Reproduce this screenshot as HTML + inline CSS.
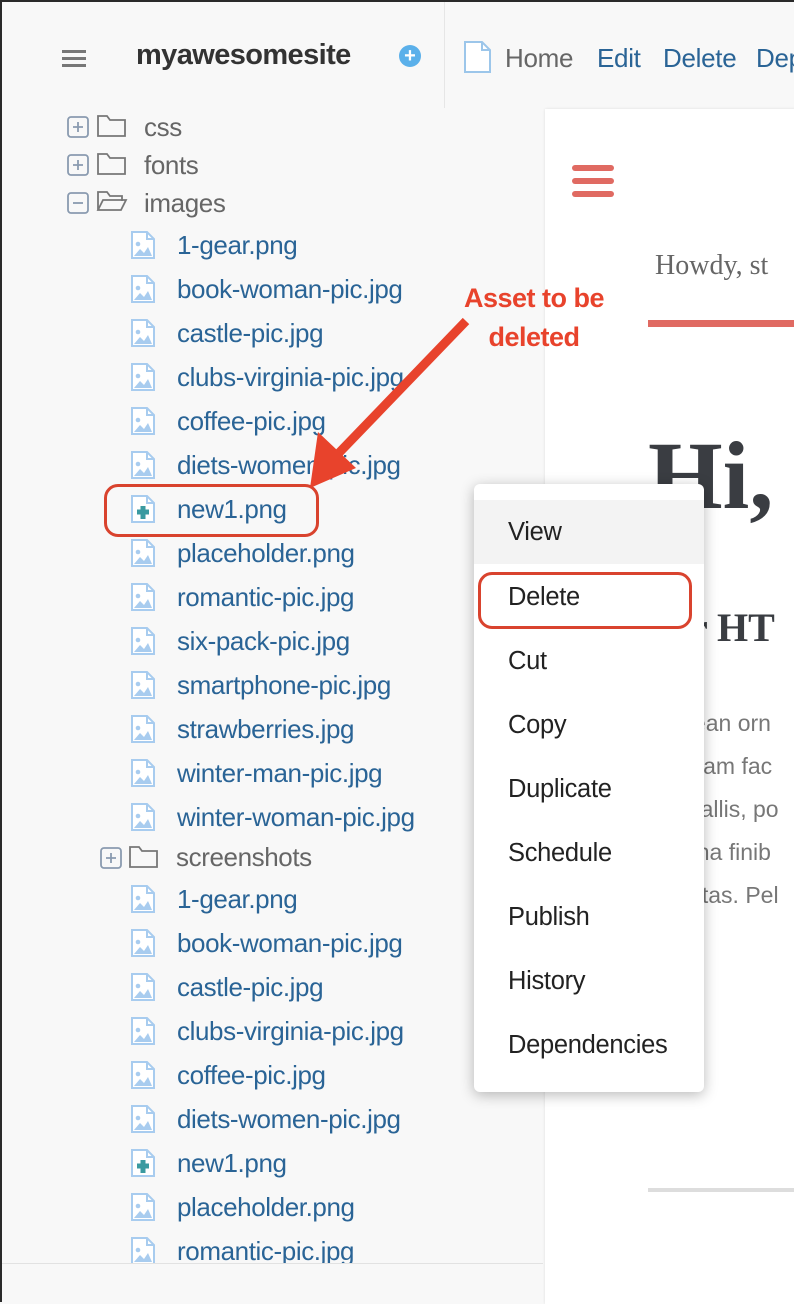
<!DOCTYPE html>
<html><head><meta charset="utf-8"><style>
*{margin:0;padding:0;box-sizing:border-box}
body{width:794px;height:1302px;overflow:hidden;background:#f8f8f8;font-family:"Liberation Sans",sans-serif;position:relative}
#w{position:absolute;left:2px;top:2px;width:794px;height:1302px}
.a{position:absolute;white-space:nowrap}
.f{position:absolute;left:175px;font-size:26px;color:#2a6496;letter-spacing:-0.4px;line-height:30px}
.ic{position:absolute;left:128px;width:26px;height:30px}
.fo{position:absolute;font-size:26px;color:#666;line-height:30px;letter-spacing:-0.4px}
.mi{position:absolute;left:506px;font-size:25.5px;color:#222;line-height:30px;letter-spacing:-0.3px}
</style></head><body>
<div id="w">
<div class="a" style="left:442px;top:0;width:1px;height:106px;background:#e6e6e6"></div>
<div class="a" style="left:543px;top:107px;width:251px;height:1195px;background:#fff;box-shadow:0 0 3px rgba(0,0,0,.1)"></div>
<div class="a" style="left:60px;top:48px;width:24px;height:3px;background:#777;box-shadow:0 7px 0 #777,0 14px 0 #777"></div>
<div class="a" style="left:134px;top:37px;font-size:29px;font-weight:bold;color:#333;letter-spacing:-0.6px">myawesomesite</div>
<div class="a" style="left:397px;top:43px;width:22px;height:22px;border-radius:50%;background:#5bb0ea;color:#fff;font-size:20px;font-weight:bold;line-height:22px;text-align:center">+</div>
<svg class="a" style="left:461px;top:38px" width="30" height="34"><path d="M2 2h17l8 8v22H2z" fill="#fff" stroke="#9cc6ea" stroke-width="2"/><path d="M19 2v8h8" fill="none" stroke="#9cc6ea" stroke-width="2"/></svg>
<div class="a" style="left:503px;top:41px;font-size:26px;color:#666;letter-spacing:-0.3px">Home</div>
<div class="a" style="left:595px;top:41px;font-size:26px;color:#2a6496;letter-spacing:-0.3px">Edit</div>
<div class="a" style="left:661px;top:41px;font-size:26px;color:#2a6496;letter-spacing:-0.3px">Delete</div>
<div class="a" style="left:754px;top:41px;font-size:26px;color:#2a6496;letter-spacing:-0.3px">Dep</div>
<svg class="a" style="left:64px;top:110px" width="64" height="110">
<g fill="none" stroke="#8a9bb0" stroke-width="1.8"><rect x="2" y="5" width="20" height="20" rx="3"/><path d="M7 15h10M12 10v10"/><rect x="2" y="43" width="20" height="20" rx="3"/><path d="M7 53h10M12 48v10"/><rect x="2" y="81" width="20" height="20" rx="3"/><path d="M7 91h10"/></g>
<g fill="none" stroke="#777" stroke-width="1.8"><path d="M32 4h9l3 4h15v16H32z"/><path d="M32 42h9l3 4h15v16H32z"/><path d="M32 98V80h9l3 4h12v5M32 98l5-10h23l-5 10z"/></g></svg>
<div class="fo" style="left:142px;top:110px">css</div>
<div class="fo" style="left:142px;top:148px">fonts</div>
<div class="fo" style="left:142px;top:186px">images</div>
<svg class="a" style="left:97px;top:842px" width="60" height="30"><g fill="none" stroke="#8a9bb0" stroke-width="1.8"><rect x="2" y="4" width="20" height="20" rx="3"/><path d="M7 14h10M12 9v10"/></g><path d="M31 3h9l3 4h15v16H31z" fill="none" stroke="#777" stroke-width="1.8"/></svg>
<div class="fo" style="left:174px;top:840px">screenshots</div>
<div id="files"></div>
<div class="a" style="left:-2px;top:1261px;width:543px;height:41px;background:#f8f8f8;border-top:1px solid #e2e2e2"></div>
<div class="a" style="left:570px;top:163px;width:42px;height:6px;border-radius:3px;background:#e06a62;box-shadow:0 13px 0 #e06a62,0 26px 0 #e06a62"></div>
<div class="a" style="left:653px;top:248px;font-family:'Liberation Serif',serif;font-size:28px;color:#666">Howdy, st</div>
<div class="a" style="left:646px;top:318px;width:148px;height:7px;background:#e06a62"></div>
<div class="a" style="left:646px;top:418px;font-family:'Liberation Serif',serif;font-size:96px;font-weight:bold;color:#3a3d42">Hi,</div>
<div class="a" style="left:688px;top:602px;font-family:'Liberation Serif',serif;font-size:40px;font-weight:bold;color:#3a3d42">r HT</div>
<div class="a" style="left:650px;top:700px;font-size:23px;color:#777;line-height:43px">Aenean orn<br>Aliquam fac<br>convallis, po<br>magna finib<br>egestas. Pel</div>
<div class="a" style="left:646px;top:1186px;width:148px;height:4px;background:#ddd"></div>
<div class="a" style="left:472px;top:482px;width:230px;height:608px;background:#fff;border-radius:6px;box-shadow:0 3px 14px rgba(0,0,0,.28)"></div>
<div class="a" style="left:472px;top:498px;width:230px;height:64px;background:#f3f3f3"></div>
<div class="mi" style="top:515px">View</div>
<div class="mi" style="top:580px">Delete</div>
<div class="mi" style="top:644px">Cut</div>
<div class="mi" style="top:708px">Copy</div>
<div class="mi" style="top:772px">Duplicate</div>
<div class="mi" style="top:836px">Schedule</div>
<div class="mi" style="top:900px">Publish</div>
<div class="mi" style="top:964px">History</div>
<div class="mi" style="top:1028px">Dependencies</div>
<div class="a" style="left:476px;top:570px;width:214px;height:57px;border:3px solid #d9432e;border-radius:14px"></div>
<div class="a" style="left:102px;top:482px;width:215px;height:53px;border:3px solid #d9432e;border-radius:14px"></div>
<div class="a" style="left:432px;top:277px;width:200px;text-align:center;font-size:27px;font-weight:bold;color:#e8432c;line-height:39px;letter-spacing:-0.5px">Asset to be<br>deleted</div>
<svg class="a" style="left:0;top:0" width="794" height="1302"><path d="M464 319L333 455" stroke="#e8432c" stroke-width="9"/><path d="M308 486L316 430L354 466z" fill="#e8432c"/></svg>
</div>
<div style="position:absolute;left:0;top:0;width:2px;height:1302px;background:#2a2a2a"></div>
<div style="position:absolute;left:0;top:0;width:794px;height:2px;background:#2a2a2a"></div>
<script>
var L1=["1-gear.png","book-woman-pic.jpg","castle-pic.jpg","clubs-virginia-pic.jpg","coffee-pic.jpg","diets-women-pic.jpg","new1.png","placeholder.png","romantic-pic.jpg","six-pack-pic.jpg","smartphone-pic.jpg","strawberries.jpg","winter-man-pic.jpg","winter-woman-pic.jpg"];
var L2=["1-gear.png","book-woman-pic.jpg","castle-pic.jpg","clubs-virginia-pic.jpg","coffee-pic.jpg","diets-women-pic.jpg","new1.png","placeholder.png","romantic-pic.jpg"];
var h="";
function ic(y,n){var s='<svg class="ic" style="top:'+(y-17)+'px" viewBox="0 0 26 30"><path d="M2 2h15l7 7v19H2z" fill="#fff" stroke="#a8ccef" stroke-width="2"/><path d="M17 2v7h7" fill="none" stroke="#a8ccef" stroke-width="2"/>';
if(n)s+='<path d="M7 18h12M13 12v13" stroke="#3a9aa0" stroke-width="5"/>';else s+='<circle cx="8" cy="14" r="2.3" fill="#a8ccef"/><path d="M4 26l6-7 4 4 4-6 4 9z" fill="#a8ccef"/>';return s+'</svg>';}
L1.forEach(function(t,i){var y=245+i*44;h+=ic(y,t=="new1.png")+'<div class="f" style="top:'+(y-17)+'px">'+t+'</div>';});
L2.forEach(function(t,i){var y=899+i*44;h+=ic(y,t=="new1.png")+'<div class="f" style="top:'+(y-17)+'px">'+t+'</div>';});
var d=document.getElementById("files");d.insertAdjacentHTML("afterend",h);d.remove();
</script>
</body></html>
